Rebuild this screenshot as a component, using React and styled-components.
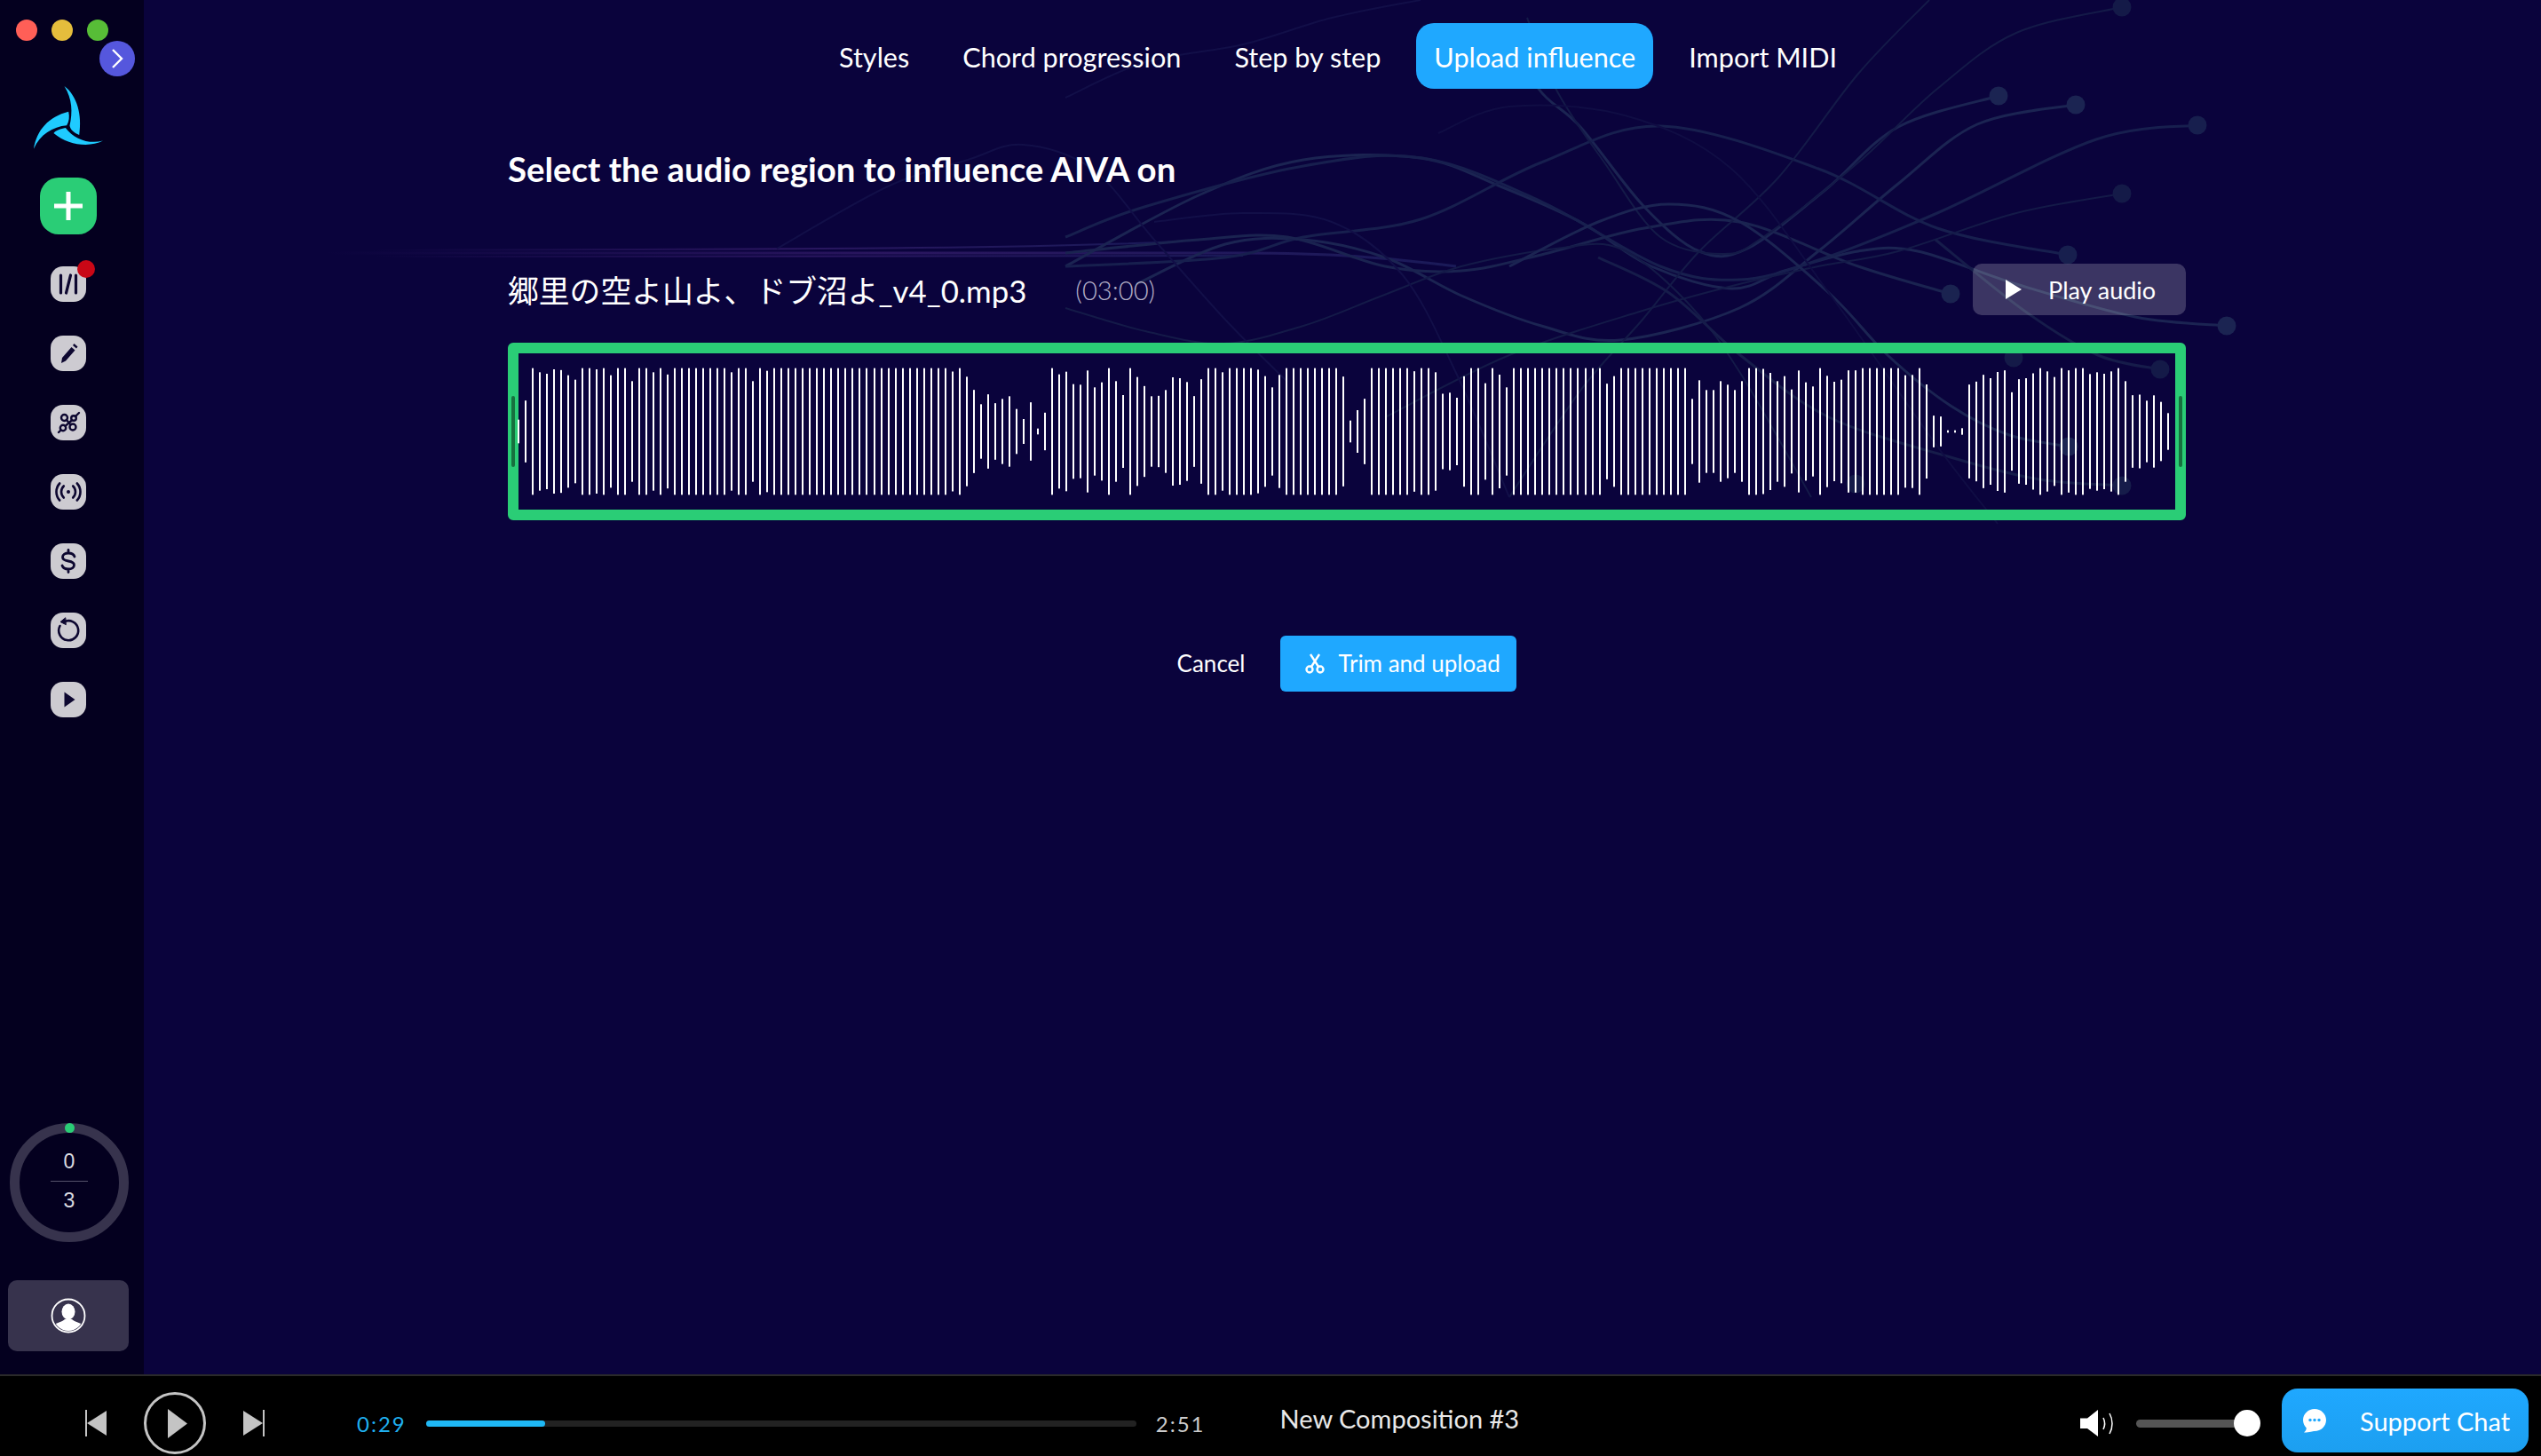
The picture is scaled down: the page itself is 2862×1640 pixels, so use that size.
import React from 'react'
import styled, { createGlobalStyle } from 'styled-components'

const Global = createGlobalStyle`
html, body {
    margin: 0;
    padding: 0;
    background: #0a033c;
}
* {
    box-sizing: border-box;
}
`

const F = 428
// bar heights of the wave, read in thirds of a pixel
const WAVE = [
    80, 209, F, 400, 390, 420, 415, 380, 350, F, F, 420, F, 380, F, F, 340, F, F, 400, F, 385,
    F, F, F, F, F, F, F, F, 400, F, F, 340, F, 410,
    F, F, F, F, F, F, F, F, F, F, F, F, F, F, F, F, F, F, F, F, F, F, F, F, F,
    405, F, 370, 281, 184, 251, 191, 220, 238, 152, 84, 197, 20, 127,
    F, 386, 404, 320, 316, 412, 298, 332, F, 340, 246, F, 368, 307, 238, 241, 280, 366, 360, 334, 239, 353,
    F, F, 400, F, F, F, F, 418, 374, 298, 382, F, F, F, F, F, F, F, F, 371, 74, 144, 221,
    F, F, F, F, F, F, 407, F, F,
    400, 255, 262, 228, 373, F, F, 326, F, 384, 298,
    F, F, F, F, F, F, F, F, F, F, F, F, F, 323, 374,
    F, F, F, F, F, F, F, F, F, F, 220, 346, 280, 280, 340, 316, 280, 340, F, F, 423, 396, 340, 374, 284, 412, 332, 304,
    F, 376, 336, 350, 413, 413, F, F, F, F, F, F, 380, 382, F, 318, 107, 101, 8, 8, 22,
    317, 337, 383, 360, 402, 413, 265, 353, 360, 393, F, 406, 368, F, 413, F, F, 388, 400, 390, 406, F,
    340, 245, 249, 208, 244, 200, 124,
]

// background strands, [colour, width, points]
const STRANDS = [
    ['#1b2452', 3, [[2508, 367], [2405, 357], [2271, 320], [2160, 283], [2093, 283], [2010, 305], [1950, 325], [1860, 300], [1780, 250], [1690, 210], [1600, 178], [1468, 180], [1350, 220], [1200, 300]]],
    ['#1b2452', 3, [[2338, 118], [2227, 140], [2138, 207], [2048, 283], [1959, 347], [1825, 383], [1736, 367], [1646, 333], [1560, 290], [1468, 270], [1380, 275], [1280, 320]]],
    ['#1b2452', 3, [[2251, 108], [2138, 143], [2057, 213], [1968, 280], [1914, 283], [1852, 233], [1780, 143], [1733, 100], [1700, 30]]],
    ['#171f4e', 3, [[2475, 141], [2361, 157], [2182, 240], [2048, 293], [1959, 315], [1870, 300], [1736, 227], [1602, 178], [1468, 187], [1289, 233], [1200, 267]]],
    ['#171f4e', 3, [[2329, 287], [2182, 257], [2048, 190], [1870, 142], [1736, 183], [1600, 247], [1468, 267], [1380, 290], [1200, 300]]],
    ['#1a2350', 3, [[2197, 331], [2093, 300], [1959, 250], [1852, 257], [1736, 287], [1646, 305], [1560, 300], [1450, 267], [1350, 270], [1200, 285]]],
    ['#141a48', 2, [[2390, 8], [2271, 37], [2182, 100], [2093, 183], [1986, 267], [1941, 286], [1870, 267], [1807, 183], [1754, 103], [1720, 20]]],
    ['#141a48', 2, [[2390, 218], [2271, 240], [2138, 283], [2048, 300], [1959, 320], [1850, 350], [1700, 400], [1560, 470]]],
    ['#141a48', 2, [[2173, 0], [2093, 83], [2003, 200], [1914, 283], [1850, 360], [1780, 440], [1700, 560]]],
    ['#141a48', 2, [[1200, 347], [1290, 373], [1378, 387], [1468, 367], [1557, 333], [1646, 300], [1753, 280], [1825, 280], [1900, 340], [1960, 420], [2040, 560]]],
    ['#1b2452', 3, [[2330, 503], [2263, 490], [2197, 457], [2126, 400], [2060, 330], [1960, 250], [1880, 230], [1800, 250], [1700, 300]]],
    ['#161c4a', 3, [[2390, 547], [2297, 540], [2197, 515], [2060, 470], [1960, 400], [1880, 330], [1800, 290]]],
    ['#161c4a', 3, [[2433, 416], [2363, 400], [2280, 350], [2180, 270]]],
    ['#120f48', 2, [[1200, 110], [1290, 70], [1400, 50], [1500, 20], [1600, 0]]],
    ['#120f48', 2, [[875, 280], [1000, 210], [1090, 180], [1152, 163], [1230, 190], [1300, 270], [1380, 360], [1450, 430]]],
    ['#120f48', 2, [[1300, 250], [1400, 240], [1500, 250], [1580, 310], [1640, 420], [1700, 560]]],
    ['#100d44', 2, [[1620, 150], [1700, 120], [1830, 130], [1950, 190], [2060, 330], [2180, 500], [2250, 590]]],
]

const NODES = [
    [2390, 8, '#141a48'], [2251, 108, '#1b2452'], [2338, 118, '#1b2452'], [2475, 141, '#171f4e'],
    [2390, 218, '#141a48'], [2329, 287, '#171f4e'], [2197, 331, '#1a2350'], [2508, 367, '#1b2452'],
    [2433, 416, '#141a48'], [2330, 503, '#1b2452'], [2390, 547, '#161c4a'], [2268, 403, '#141a48'], [2090, 545, '#141a48'],
]

// smooth curve through the points
const smooth = (pts) => {
    let d = `M${pts[0][0]} ${pts[0][1]}`
    for (let i = 0; i < pts.length - 1; i++) {
        const p0 = pts[i - 1] || pts[i]
        const p1 = pts[i]
        const p2 = pts[i + 1]
        const p3 = pts[i + 2] || p2
        d += ` C${p1[0] + (p2[0] - p0[0]) / 6} ${p1[1] + (p2[1] - p0[1]) / 6} ${p2[0] - (p3[0] - p1[0]) / 6} ${p2[1] - (p3[1] - p1[1]) / 6} ${p2[0]} ${p2[1]}`
    }
    return d
}

const Page = styled.div`
    width: 2862px;
    height: 1640px;
    display: flex;
    flex-direction: column;
    overflow: hidden;
    font-family: Lato, "Noto Sans CJK JP", sans-serif;
    color: #fff;
`

const Body = styled.div`
    flex: 1;
    display: flex;
    min-height: 0;
`

const Sidebar = styled.aside`
    width: 162px;
    flex: none;
    background: #04001f;
    display: flex;
    flex-direction: column;
    align-items: center;
    padding: 22px 8px 26px 0;
    position: relative;
`

const Lights = styled.div`
    align-self: flex-start;
    display: flex;
    gap: 16px;
    padding-left: 18px;
`

const Light = styled.span`
    width: 24px;
    height: 24px;
    border-radius: 50%;
    background: ${(p) => p.$color};
`

const Collapse = styled.div`
    position: absolute;
    left: 112px;
    top: 46px;
    width: 40px;
    height: 40px;
    border-radius: 50%;
    background: #5557dd;
    display: flex;
    align-items: center;
    justify-content: center;
`

const Logo = styled.svg`
    width: 78px;
    height: 71px;
    margin-top: 51px;
`

const AddButton = styled.div`
    width: 64px;
    height: 64px;
    margin-top: 32px;
    border-radius: 21px;
    background: #2acd76;
    display: flex;
    align-items: center;
    justify-content: center;
`

const Tiles = styled.div`
    margin-top: 36px;
    display: flex;
    flex-direction: column;
    gap: 38px;
`

const Tile = styled.div`
    position: relative;
    width: 40px;
    height: 40px;
    border-radius: 14px;
    background: #cdcbd1;
    color: #0d0730;
    display: flex;
    align-items: center;
    justify-content: center;
`

const Badge = styled.span`
    position: absolute;
    right: -10px;
    top: -7px;
    width: 20px;
    height: 20px;
    border-radius: 50%;
    background: #c90716;
`

const Ring = styled.div`
    position: relative;
    margin-top: auto;
    margin-left: 2px;
    width: 134px;
    height: 134px;
    padding-bottom: 3px;
    border-radius: 50%;
    border: 11px solid #37334d;
    display: flex;
    flex-direction: column;
    align-items: center;
    justify-content: center;
    font-family: "Liberation Sans", sans-serif;
    font-size: 23px;
    color: #dcdce0;
`

const RingDot = styled.span`
    position: absolute;
    top: -11px;
    left: 50%;
    margin-left: -5.5px;
    width: 11px;
    height: 11px;
    border-radius: 50%;
    background: #2acd76;
`

const RingRule = styled.span`
    width: 42px;
    height: 1px;
    background: #55526a;
    margin: 8px 0 8px;
`

const Profile = styled.div`
    width: 136px;
    height: 80px;
    margin-top: 43px;
    border-radius: 10px;
    background: #37334d;
    display: flex;
    align-items: center;
    justify-content: center;
`

const Main = styled.main`
    flex: 1;
    position: relative;
    background: #0a033c;
    padding: 26px 400px 0 410px;
    min-width: 0;
`

const Strands = styled.svg`
    position: absolute;
    left: 0;
    top: 0;
    width: 2700px;
    height: 1548px;
    pointer-events: none;
`

const Content = styled.div`
    position: relative;
`

const Tabs = styled.nav`
    display: flex;
    justify-content: center;
    gap: 20px;
    margin-left: -20px;
`

const Tab = styled.div`
    height: 74px;
    padding: 2px 20px 0;
    border-radius: 20px;
    display: flex;
    align-items: center;
    font-size: 30.6px;
    background: ${(p) => (p.$active ? '#1fa8ff' : 'transparent')};
`

const Title = styled.h1`
    margin: 63px 0 0;
    font-size: 38.4px;
    line-height: 54px;
    font-weight: 700;
`

const FileRow = styled.div`
    margin-top: 80px;
    height: 58px;
    display: flex;
    align-items: center;
`

const FileName = styled.span`
    font-size: 34.8px;
`

const Duration = styled.span`
    margin-left: 55px;
    font-size: 29.2px;
    font-weight: 300;
    color: #b4b0c8;
`

const PlayAudio = styled.div`
    margin-left: auto;
    width: 240px;
    height: 58px;
    border-radius: 10px;
    background: rgba(255, 255, 255, 0.2);
    display: flex;
    align-items: center;
    padding-left: 37px;
    gap: 30px;
    font-size: 27px;
`

const WaveBox = styled.div`
    position: relative;
    margin-top: 31px;
    height: 200px;
    border: 12px solid #2acd76;
    border-radius: 6px;
`

const Handle = styled.span`
    position: absolute;
    top: 48px;
    ${(p) => p.$side}: -8px;
    width: 4px;
    height: 80px;
    border-radius: 2px;
    background: #17713f;
`

const Wave = styled.svg`
    display: block;
    width: 100%;
    height: 100%;
    overflow: visible;
`

const Actions = styled.div`
    margin-top: 130px;
    display: flex;
    justify-content: center;
    align-items: center;
    gap: 40px;
`

const Cancel = styled.span`
    padding-bottom: 2px;
    font-size: 26px;
`

const TrimButton = styled.div`
    width: 266px;
    height: 63px;
    border-radius: 6px;
    background: #1fa8ff;
    display: flex;
    align-items: center;
    padding: 0 0 2px 27px;
    gap: 14px;
    font-size: 26px;
`

const Player = styled.footer`
    height: 92px;
    flex: none;
    background: #000;
    border-top: 2px solid #2a2a2a;
    display: flex;
    align-items: center;
    padding: 16px 14px 0 96px;
    position: relative;
`

const PlayerIcon = styled.svg`
    flex: none;
    display: block;
    margin-left: ${(p) => p.$left || 0}px;
`

const PlayCircle = styled.div`
    width: 70px;
    height: 70px;
    margin-left: 42px;
    border: 3px solid #c4c4c4;
    border-radius: 50%;
    flex: none;
    display: flex;
    align-items: center;
    justify-content: center;
    padding-left: 5px;
`

const Time = styled.span`
    font-size: 24px;
    letter-spacing: 2px;
    flex: none;
    color: ${(p) => p.$color};
    margin-left: ${(p) => p.$left}px;
`

const Track = styled.div`
    width: 800px;
    height: 7px;
    margin-left: 22px;
    flex: none;
    border-radius: 4px;
    background: #222;
`

const TrackFill = styled.div`
    width: 134px;
    height: 100%;
    border-radius: 4px;
    background: #1fb8f5;
`

const SongName = styled.span`
    margin-left: 84px;
    margin-top: -11px;
    font-size: 29px;
    color: #e8e8e8;
`

const Volume = styled.div`
    margin-left: auto;
    display: flex;
    align-items: center;
    gap: 24px;
`

const VolumeTrack = styled.div`
    position: relative;
    width: 125px;
    height: 9px;
    border-radius: 5px;
    background: #555;
`

const VolumeKnob = styled.span`
    position: absolute;
    right: -15px;
    top: -11px;
    width: 30px;
    height: 30px;
    border-radius: 50%;
    background: #fff;
`

const ChatButton = styled.div`
    width: 278px;
    height: 72px;
    margin-left: 39px;
    margin-top: -6px;
    border-radius: 18px;
    background: linear-gradient(#1fa8ff, #1c9ff0);
    display: flex;
    align-items: center;
    padding-left: 24px;
    gap: 38px;
    font-size: 29px;
`

const Stroke = ({ children, size = 40 }) => (
    <svg width={size} height={size} viewBox="0 0 40 40" fill="none" stroke="currentColor" strokeLinecap="round" strokeLinejoin="round">
        {children}
    </svg>
)

const App = () => (
    <Page>
        <Global />
        <Body>
            <Sidebar>
                <Lights>
                    <Light $color="#ff5f57" />
                    <Light $color="#e5bd3c" />
                    <Light $color="#57bd37" />
                </Lights>
                <Collapse>
                    <svg width="16" height="24" viewBox="0 0 16 24" fill="none" stroke="#fff" strokeWidth="2.4">
                        <path d="M3 2l10 10L3 22" />
                    </svg>
                </Collapse>
                <Logo viewBox="115 292 233 212" fill="#1fcbff">
                    <path d="M218 292C262 325 278 390 268 456C250 450 238 438 236 425C246 380 245 335 218 292Z" />
                    <path d="M115 503C125 440 165 395 232 378C236 395 234 412 226 424C180 428 135 455 115 503Z" />
                    <path d="M348 476C300 500 230 490 182 450C190 440 205 435 222 432C250 470 300 488 348 476Z" />
                </Logo>
                <AddButton>
                    <svg width="32" height="32" viewBox="0 0 32 32" fill="#fff">
                        <rect x="13.5" y="0" width="5" height="32" />
                        <rect x="0" y="13.5" width="32" height="5" />
                    </svg>
                </AddButton>
                <Tiles>
                    <Tile>
                        <Stroke>
                            <path d="M11.5 10v20M17.5 30l5-20M28.5 10v20" strokeWidth="3.2" />
                        </Stroke>
                        <Badge />
                    </Tile>
                    <Tile>
                        <svg width="40" height="40" viewBox="0 0 40 40" fill="currentColor">
                            <path d="M12 31l1-6 10.5-12 4 3.5L17 28.500z" />
                            <path d="M25 11l1.500-2 4 3.500-1.500 2z" />
                        </svg>
                    </Tile>
                    <Tile>
                        <Stroke>
                            <g strokeWidth="2.4">
                                <circle cx="15.500" cy="14.500" r="3.500" />
                                <circle cx="25" cy="25" r="3.500" />
                                <circle cx="26" cy="15" r="2.800" />
                                <circle cx="14" cy="26" r="3.200" />
                                <path d="M18 17l4.500 5.500M28 13l4-4M11.500 28.500L9 31M23.800 17.500l-7.300 6.300" />
                            </g>
                        </Stroke>
                    </Tile>
                    <Tile>
                        <Stroke>
                            <circle cx="20" cy="20" r="2" fill="currentColor" stroke="none" />
                            <g strokeWidth="2.600">
                                <path d="M14.800 13.500a9 9 0 0 0 0 13M25.200 13.500a9 9 0 0 1 0 13" />
                                <path d="M10.200 10.500a14 14 0 0 0 0 19M29.800 10.500a14 14 0 0 1 0 19" />
                            </g>
                        </Stroke>
                    </Tile>
                    <Tile>
                        <Stroke>
                            <path d="M27 15C26 12 23.500 11 20 11C16.500 11 13.500 12.700 13.500 15.500C13.500 18.500 16.500 19.400 20 20C23.500 20.600 26.500 21.500 26.500 24.500C26.500 27.300 23.500 29 20 29C16.500 29 14 28 13 25M20 7.500V11M20 29V32.500" strokeWidth="2.800" />
                        </Stroke>
                    </Tile>
                    <Tile>
                        <Stroke>
                            <path d="M15 10.500A11 11 0 1 1 10.500 15" strokeWidth="2.600" />
                            <path d="M16.500 6L11 10.500l6 3z" fill="currentColor" strokeWidth="1" />
                        </Stroke>
                    </Tile>
                    <Tile>
                        <svg width="40" height="40" viewBox="0 0 40 40" fill="currentColor">
                            <path d="M15.500 11.500L27.500 20L15.500 28.500z" />
                        </svg>
                    </Tile>
                </Tiles>
                <Ring>
                    <RingDot />
                    <span>0</span>
                    <RingRule />
                    <span>3</span>
                </Ring>
                <Profile>
                    <svg width="40" height="40" viewBox="0 0 40 40">
                        <defs>
                            <clipPath id="profile-clip">
                                <circle cx="20" cy="20" r="17" />
                            </clipPath>
                        </defs>
                        <circle cx="20" cy="20" r="18.500" fill="none" stroke="#fff" strokeWidth="1.800" />
                        <g fill="#fff" clipPath="url(#profile-clip)">
                            <ellipse cx="20" cy="15.500" rx="7.500" ry="9" />
                            <path d="M3 40V31C6 28 13 27 16 24H24C27 27 34 28 37 31V40Z" />
                        </g>
                    </svg>
                </Profile>
            </Sidebar>
            <Main>
                <Strands viewBox="162 0 2700 1548" fill="none">
                    <defs>
                        <linearGradient id="strand-fade">
                            <stop offset="0" stopColor="#2a1660" stopOpacity="0" />
                            <stop offset="0.5" stopColor="#2a1660" />
                            <stop offset="1" stopColor="#1a1a58" />
                        </linearGradient>
                    </defs>
                    <path d="M366 285H1400C1500 285 1560 290 1640 300" stroke="url(#strand-fade)" strokeWidth="3" />
                    <path d="M420 282C800 280 1100 282 1330 272" stroke="url(#strand-fade)" strokeWidth="2" />
                    <path d="M420 289C800 290 1100 290 1400 288" stroke="url(#strand-fade)" strokeWidth="2" />
                    {STRANDS.map(([color, width, pts], i) => (
                        <path key={i} d={smooth(pts)} stroke={color} strokeWidth={width} />
                    ))}
                    {NODES.map(([x, y, color], i) => (
                        <circle key={i} cx={x} cy={y} r="10.500" fill={color} />
                    ))}
                </Strands>
                <Content>
                    <Tabs>
                        <Tab>Styles</Tab>
                        <Tab>Chord progression</Tab>
                        <Tab>Step by step</Tab>
                        <Tab $active>Upload influence</Tab>
                        <Tab>Import MIDI</Tab>
                    </Tabs>
                    <Title>Select the audio region to influence AIVA on</Title>
                    <FileRow>
                        <FileName>郷里の空よ山よ、ドブ沼よ_v4_0.mp3</FileName>
                        <Duration>(03:00)</Duration>
                        <PlayAudio>
                            <svg width="18" height="22" viewBox="0 0 18 22" fill="#fff">
                                <path d="M0 0L18 11L0 22Z" />
                            </svg>
                            Play audio
                        </PlayAudio>
                    </FileRow>
                    <WaveBox>
                        <Handle $side="left" />
                        <Wave viewBox="0 0 1866 176" fill="#fff">
                            {WAVE.map((v, i) => (
                                <rect key={i} x={Math.round(i * 8.01) - 1} y={88 - v / 6} width="2" height={v / 3} />
                            ))}
                        </Wave>
                        <Handle $side="right" />
                    </WaveBox>
                    <Actions>
                        <Cancel>Cancel</Cancel>
                        <TrimButton>
                            <svg width="24" height="24" viewBox="0 0 24 24" fill="none" stroke="#fff" strokeWidth="2.400">
                                <circle cx="6" cy="19" r="3.500" />
                                <circle cx="18" cy="19" r="3.500" />
                                <path d="M8 16L17 2M16 16L7 2" />
                            </svg>
                            Trim and upload
                        </TrimButton>
                    </Actions>
                </Content>
            </Main>
        </Body>
        <Player>
            <PlayerIcon width="24" height="30" viewBox="0 0 24 30" fill="#c4c4c4">
                <rect x="0" y="0" width="2" height="30" />
                <path d="M24 1V29L2 15Z" />
            </PlayerIcon>
            <PlayCircle>
                <svg width="22" height="33" viewBox="0 0 22 33" fill="#c4c4c4">
                    <path d="M0 0L22 16.500L0 33Z" />
                </svg>
            </PlayCircle>
            <PlayerIcon $left={42} width="24" height="30" viewBox="0 0 24 30" fill="#c4c4c4">
                <rect x="22" y="0" width="2" height="30" />
                <path d="M0 1V29L22 15Z" />
            </PlayerIcon>
            <Time $color="#1fb0f0" $left={104}>0:29</Time>
            <Track>
                <TrackFill />
            </Track>
            <Time $color="#ccc" $left={22}>2:51</Time>
            <SongName>New Composition #3</SongName>
            <Volume>
                <svg width="39" height="30" viewBox="0 0 39 30" fill="none">
                    <path d="M0 9.500H8L20 0V30L8 21H0Z" fill="#fff" />
                    <path d="M26 9C28 13 28 18 26 22M33 4C37 11 37 20 33 27" stroke="#fff" strokeWidth="1.500" />
                </svg>
                <VolumeTrack>
                    <VolumeKnob />
                </VolumeTrack>
            </Volume>
            <ChatButton>
                <svg width="26" height="28" viewBox="0 0 26 28">
                    <path d="M13 1C20 1 26 6.500 26 13.500C26 20.500 20 26 13 26C10.500 26 8 27.500 1 27.500C3 26 3.500 24.500 3.800 22.500C1.500 20 0 17 0 13.500C0 6.500 6 1 13 1Z" fill="#fff" />
                    <circle cx="8" cy="13.500" r="1.700" fill="#1fa8ff" />
                    <circle cx="13" cy="13.500" r="1.700" fill="#1fa8ff" />
                    <circle cx="18" cy="13.500" r="1.700" fill="#1fa8ff" />
                </svg>
                Support Chat
            </ChatButton>
        </Player>
    </Page>
)

export default App
